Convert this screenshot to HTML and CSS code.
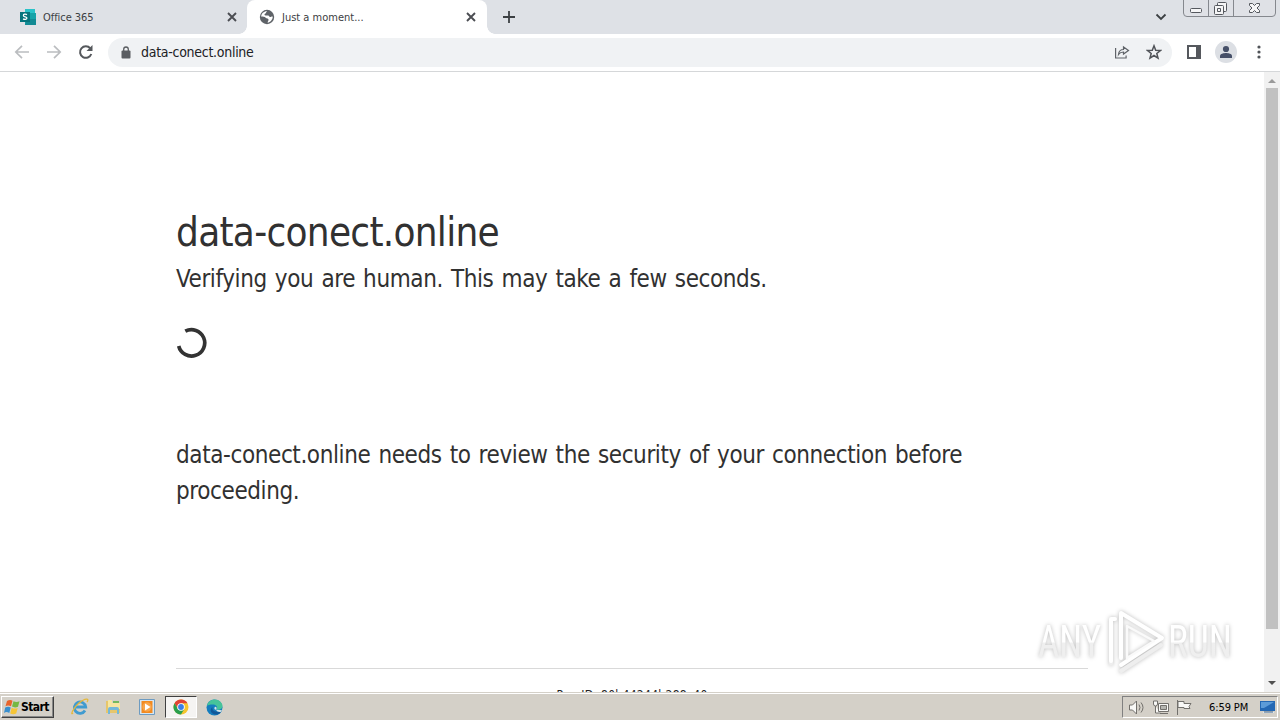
FILE: index.html
```html
<!DOCTYPE html>
<html lang="en">
<head>
<meta charset="utf-8">
<title>Just a moment...</title>
<link rel="stylesheet" href="styles.css">
</head>
<body>
<div class="desktop">
  <header class="tabs">
    <div class="tab tab-idle">
      <svg class="favicon" width="16" height="16" viewBox="0 0 16 16"><path fill="#29c2c8" d="M5 0h10v5h1v11H5z"/><path fill="#128a94" d="M6 8h10v8H5z"/><path fill="#16a3a8" d="M10 4h6v6h-6z"/><path fill="#05747c" d="M0 3h10v10H0z"/><path d="M7 5.6C5.5 4.8 3.4 5 3.4 6.4c0 1.8 3.5 1 3.5 2.7 0 1.5-2.4 1.6-3.8.8" fill="none" stroke="#fff" stroke-width="1.3"/></svg>
      <span class="tab-title office">Office 365</span>
      <svg class="close" width="10" height="10" viewBox="0 0 10 10"><path d="M1 1l8 8M9 1L1 9"/></svg>
    </div>
    <div class="tab tab-active">
      <svg class="favicon" width="16" height="16" viewBox="0 0 16 16"><circle cx="8" cy="8" r="7.2" fill="#5f6368"/><path fill="#fff" d="M8.2 2.2C6.700 3 7.400 4 6.300 4.600 5 5.200 5.400 6.500 6.600 6.500h2.500c1.300 0 .8 1.500 2 1.500s1.500-.8 2.700-.3c-.2 3-2.500 5.600-5.200 6 .1-1.700 1.200-1.900.9-3.200-.3-1.200-2-1-2.800-1.800C5.700 7.700 4 7.700 2.200 7.500 2.300 4.500 4.900 2 8.200 2.200z"/></svg>
      <span class="tab-title moment">Just a moment...</span>
      <svg class="close" width="10" height="10" viewBox="0 0 10 10"><path d="M1 1l8 8M9 1L1 9"/></svg>
    </div>
    <svg class="plus" width="12" height="12" viewBox="0 0 12 12"><path d="M6 0v12M0 6h12" stroke="#3c4043" stroke-width="1.8"/></svg>
    <svg class="chevron" width="12" height="8" viewBox="0 0 12 8"><path d="M1.500 1.500L6 6l4.500-4.500" fill="none" stroke="#3c4043" stroke-width="1.8"/></svg>
    <svg class="winbtns" width="94" height="18" viewBox="0 0 94 18"><path d="M.5 0v13q0 3.500 3.500 3.500h85q3.500 0 3.500-3.500V0M25.500 0v16M50.500 0v16" fill="#dfe1e6" stroke="#85888e"/><g fill="#f5f5f6" stroke="#55585e"><rect x="7.500" y="8.500" width="11" height="4" rx="1"/><rect x="34.500" y="2.500" width="9" height="9" rx="1"/><rect x="31.500" y="5.500" width="9" height="9" rx="1"/><path d="M34.500 8.500h3v3h-3zM66.500 3.500h3l2 2 2-2h3v2l-2.500 2.500 2.500 2.500v2h-3l-2-2-2 2h-3v-2L69 8l-2.500-2.500z"/></g></svg>
  </header>
  <nav class="toolbar">
    <svg class="nav-left" width="94" height="20" viewBox="0 0 94 20" fill="none" stroke-width="1.700"><path stroke="#bbbdc0" d="M15 10H2M8 3.800L1.800 10 8 16.200M33 10h13M40 3.800l6.200 6.200-6.200 6.200"/><path stroke="#55585c" stroke-width="2" d="M76.300 6.300A5.800 5.800 0 1 0 77.300 12"/><path fill="#55585c" d="M78.500 3v6h-6z"/></svg>
    <div class="omnibox">
      <svg class="lock" width="10" height="13" viewBox="0 0 10 13"><rect x=".5" y="4.500" width="9" height="8" rx="1" fill="#5a5d61"/><path d="M2.700 5V3.300a2.300 2.300 0 0 1 4.600 0V5" fill="none" stroke="#5a5d61" stroke-width="1.300"/></svg>
      <span class="url">data-conect.online</span>
      <svg class="share" width="16" height="14" viewBox="0 0 16 14" fill="none" stroke="#5f6368" stroke-width="1.200"><path d="M1.600 3v10h10.500v-2.500M4.500 9.500c.3-3 2-5 5-5V2l5 3.500-5 3.600V7c-2.300 0-3.800.8-5 2.500z"/></svg>
      <svg class="star" width="16" height="16" viewBox="0 0 16 16"><path d="M8 1.800l1.700 4.400 4.700.3-3.600 3 1.200 4.600L8 11.500l-4 2.600 1.200-4.600-3.600-3 4.700-.3z" fill="none" stroke="#505358" stroke-width="1.500"/></svg>
    </div>
    <svg class="panel" width="14" height="14" viewBox="0 0 14 14"><path d="M1 1h12v12H1z" fill="none" stroke="#55585d" stroke-width="2"/><path d="M9 0h5v14H9z" fill="#55585d"/></svg>
    <svg class="avatar" width="22" height="22" viewBox="0 0 22 22"><circle cx="11" cy="11" r="11" fill="#dcdfe4"/><circle cx="11" cy="8" r="3.100" fill="#465068"/><path d="M5 17v-2c0-2.200 3.800-3 6-3s6 .8 6 3v2z" fill="#465068"/></svg>
    <svg class="dots" width="4" height="14" viewBox="0 0 4 14" fill="#505358"><circle cx="2" cy="2" r="1.600"/><circle cx="2" cy="7" r="1.600"/><circle cx="2" cy="12" r="1.600"/></svg>
  </nav>
  <div class="viewport">
    <main class="page">
      <h1>data-conect.online</h1>
      <h2>Verifying you are human. This may take a few seconds.</h2>
      <svg class="spinner" width="32" height="32" viewBox="0 0 32 32"><path d="M9.300 4.200A13.200 13.200 0 1 1 2.700 19" fill="none" stroke="#333" stroke-width="3.700"/></svg>
      <p>data-conect.online needs to review the security of your connection before<br>proceeding.</p>
      <footer>Ray ID: 80b44244b288c40</footer>
    </main>
    <div class="scroll">
      <svg width="8" height="4" viewBox="0 0 8 4"><path d="M0 4l4-4 4 4z" fill="#9a9a9a"/></svg>
      <div class="thumb"></div>
      <svg class="down" width="8" height="4" viewBox="0 0 8 4"><path d="M0 0l4 4 4-4z" fill="#505050"/></svg>
    </div>
    <svg class="mark" width="226" height="84" viewBox="0 0 226 84">
      <defs><linearGradient id="fade" x1="0" y1="0" x2="0" y2="1"><stop offset=".5" stop-color="#fff"/><stop offset=".52" stop-color="#efefef"/></linearGradient></defs>
      <g fill="url(#fade)" class="mark-text"><text x="8" y="55" textLength="63" lengthAdjust="spacingAndGlyphs">ANY</text><text x="138" y="55" textLength="64" lengthAdjust="spacingAndGlyphs">RUN</text></g>
      <g fill="none" stroke-linejoin="round" stroke-linecap="round" class="mark-play"><path stroke="#eee" stroke-width="4" d="M81 44v18M91 69l40-26"/><path stroke="#fff" stroke-width="4" d="M85 17h-4v42M91 56V11l41 25-41 27"/><path stroke="#fafafa" stroke-width="2.500" d="M97 57V24l27 15-27 17"/></g>
    </svg>
  </div>
  <div class="taskbar">
    <div class="start"><svg width="17" height="16" viewBox="0 0 17 16"><path d="M3 2q3-2 5.500-.3L7 7.300q-3-1.500-5.500 0z" fill="#e9642b"/><path d="M9.500 2.200q3 1.500 6 0L14 7.700q-3 1.500-6-.1z" fill="#75b843"/><path d="M1.200 8.500q3-1.500 5.500 0L5.300 14q-3-1.800-5.300 0z" fill="#398fce"/><path d="M7.700 8.700q3 1.700 6 .2l-1.500 5.500q-3 1.500-6 0z" fill="#f6c536"/></svg><b>Start</b></div>
    <svg class="ie" width="18" height="18" viewBox="0 0 18 18"><path d="M14 12.500A5.700 5.700 0 1 1 14.700 9H5" fill="none" stroke="#409bd0" stroke-width="2.800"/><path d="M2 15C-1 18 2 10 8 5s11-5 8-1" fill="none" stroke="#e5b83a" stroke-width="1.300"/></svg>
    <svg class="folder" width="17" height="16" viewBox="0 0 17 16"><path d="M1 2h5l1 2h8v10H1z" fill="#e6c66b"/><path d="M3 1h4v3h8v6H3z" fill="#f6e6a1"/><path d="M8 2h6v2H8z" fill="#74b95f"/><path d="M3 15v-5q0-2 2-2h7q2 0 2 2v5h-2v-4H5v4z" fill="#74b8d8"/></svg>
    <svg class="media" width="16" height="16" viewBox="0 0 16 16"><path d="M.5.500h15v15H.5z" fill="#d6e6f2" stroke="#6d9bc1"/><path d="M2.500 2h11v12h-11z" fill="#f28a20"/><circle cx="8" cy="8" r="4.700" fill="#f8a54a"/><path d="M6 4.500L11.500 8 6 11.500z" fill="#fff"/></svg>
    <div class="chrome-btn"><svg width="16" height="16" viewBox="0 0 16 16"><circle cx="8" cy="8" r="7.500" fill="#f5c52d"/><path d="M1.500 4.250A7.500 7.500 0 0 1 14.500 4.250H8L5 9.800z" fill="#e04335"/><path d="M1.500 4.250A7.500 7.500 0 0 0 8 15.500l3.300-5.600H5z" fill="#299f4d"/><circle cx="8" cy="8" r="3.800" fill="#fff"/><circle cx="8" cy="8" r="2.900" fill="#397fe6"/></svg></div>
    <svg class="edge" width="17" height="17" viewBox="0 0 17 17"><circle cx="8.500" cy="8.500" r="8" fill="#147dbe"/><path d="M.8 7C2 2.500 5.500.5 8.500.5c5 0 8 3.500 8 6.500 0 3-3 4.500-6 3.500 2-3-1-5-4-5C3.800 5.500 2 6 .8 7z" fill="#46c39a"/><path d="M6.500 8c-1 3 2 5.500 8.500 4.700-2 3-6 3.500-8 2C4 13 4 10 6.500 8z" fill="#115799"/><path d="M10 10.700c-2 0-2-2-1-3 2 0 2 2 1 3l6 .5-1 1.500c-2 .5-4 0-5-2z" fill="#d7e4e7"/></svg>
    <div class="tray">
      <svg width="66" height="17" viewBox="0 0 66 17" fill="#f8f8f6" stroke="#72706c"><path d="M1.500 6h3l4-4v13l-4-4h-3z"/><path d="M11 5.500q2 3 0 6M13 3.500q4 5 0 10" fill="none"/><path d="M30.500 4.500h10v8h-10zM32 14.500h8M25.500 2v3q0 2 2 2t2-2V2zM27.500 7v7h5"/><path d="M32.500 6.500h6v4h-6z" fill="#b5b5b0"/><path d="M49.500 1v15M50 2.500h6v2h7l-2 3 1 2h-6v-1h-6z"/></svg>
      <span class="clock">6:59 PM</span>
      <svg class="monitor" width="16" height="14" viewBox="0 0 16 14"><path d="M0 1h15v10H0z" fill="#2468b4"/><path d="M1 2h13L4 8H1z" fill="#5c9bd8"/><path d="M3 12h11v1H3z" fill="#dce9f3"/><path d="M4 12h9" stroke="#476789"/></svg>
    </div>
  </div>
</div>
</body>
</html>
```
FILE: styles.css
```css
* { box-sizing: border-box; }
body { margin: 0; font-family: "DejaVu Sans Condensed", "DejaVu Sans", sans-serif; font-stretch: condensed; color: #313131; }
svg { display: block; flex: none; }
.desktop { width: 1280px; height: 720px; display: flex; flex-direction: column; overflow: hidden; background: #fff; }
.tabs { height: 34px; flex: none; display: flex; background: #dee1e6; align-items: center; }
.tab { display: flex; align-items: center; height: 34px; flex: none; }
.tab-idle { width: 247px; padding-left: 20px; }
.tab-active { width: 240px; background: #fff; border-radius: 8px 8px 0 0; padding-left: 12px; position: relative; }
.tab-active::before, .tab-active::after { content: ""; position: absolute; bottom: 0; width: 8px; height: 8px; }
.tab-active::before { left: -8px; background: radial-gradient(circle at 0 0, #dee1e6 7.500px, #fff 8px); }
.tab-active::after { right: -8px; background: radial-gradient(circle at 100% 0, #dee1e6 7.500px, #fff 8px); }
.tab-title { font-size: 11px; margin-left: 7px; white-space: nowrap; color: #3c4043; }
.office { letter-spacing: -.05px; }
.moment { letter-spacing: 0; }
.close { margin-left: auto; margin-right: 11px; fill: none; stroke: #4b4d52; stroke-width: 1.900; }
.tab-idle .close { margin-right: 10px; }
.plus { margin-left: 16px; }
.chevron { margin-left: auto; margin-right: 16px; }
.winbtns { margin-right: 3px; align-self: flex-start; }
.toolbar { height: 38px; flex: none; border-bottom: 1px solid #d5d7d9; display: flex; align-items: center; padding-left: 14px; padding-bottom: 1px; }
.omnibox { width: 1064px; height: 29px; border-radius: 15px; background: #f0f2f4; display: flex; align-items: center; padding-left: 13px; }
.url { font-size: 14px; letter-spacing: -.28px; margin-left: 10px; color: #202124; }
.share { margin-left: auto; }
.star { margin-left: 16px; margin-right: 10px; }
.panel { margin-left: 15px; }
.avatar { margin-left: 14px; }
.dots { margin-left: 20px; }
.viewport { height: 620px; flex: none; position: relative; display: flex; overflow: hidden; }
.page { width: 1264px; padding: 130px 176px 0; }
h1 { margin: 0; height: 60px; line-height: 60px; font-size: 40px; font-weight: 400; white-space: nowrap; letter-spacing: -.72px; }
h2, p { font-size: 24px; font-weight: 400; line-height: 36px; letter-spacing: -.4px; word-spacing: 1.600px; white-space: nowrap; }
h2 { margin: -1px 0 0; height: 36px; }
.spinner { margin: 30px 0 78px; }
p { margin: 0; height: 72px; }
footer { width: 912px; margin-top: 159px; border-top: 1px solid #d9d9d9; padding-top: 17px; text-align: center; font-size: 12px; line-height: 18px; letter-spacing: .3px; color: #222; }
.scroll { width: 16px; background: #f1f1f1; display: flex; flex-direction: column; align-items: center; padding-top: 7px; }
.thumb { width: 12px; height: 541px; margin-top: 5px; background: #c1c1c1; }
.down { margin-top: 52px; }
.mark { position: absolute; left: 1030px; top: 530px; filter: drop-shadow(0 0 2px #bbb); }
.mark-text { font-family: Roboto, sans-serif; font-size: 44px; font-weight: 400; }
.taskbar { height: 28px; flex: none; background: #d4d0c8; border-top: 1px solid #d4d0c8; box-shadow: inset 0 1px #fff; display: flex; align-items: center; padding-top: 1px; }
.start { width: 53px; height: 22px; margin-left: 1px; border: 1px solid; border-color: #fff #404040 #404040 #fff; box-shadow: inset -1px -1px #888; display: flex; align-items: center; padding-left: 2px; color: #000; font-size: 12px; letter-spacing: -.6px; }
.ie { margin-left: 17px; }
.folder { margin-left: 16px; }
.media { margin-left: 17px; }
.chrome-btn { width: 32px; height: 22px; margin-left: 10px; background: #f5f4f2; border: 1px solid; border-color: #404040 #fff #fff #404040; display: flex; align-items: center; justify-content: center; }
.edge { margin-left: 9px; }
.tray { width: 156px; height: 22px; margin-left: auto; margin-right: 2px; border: 1px solid; border-color: #808080 #fff #fff #808080; display: flex; align-items: center; padding-left: 5px; color: #000; }
.clock { width: 40px; margin-left: 15px; font-size: 11px; letter-spacing: -.1px; white-space: nowrap; }
.monitor { margin-left: 11px; }
```
